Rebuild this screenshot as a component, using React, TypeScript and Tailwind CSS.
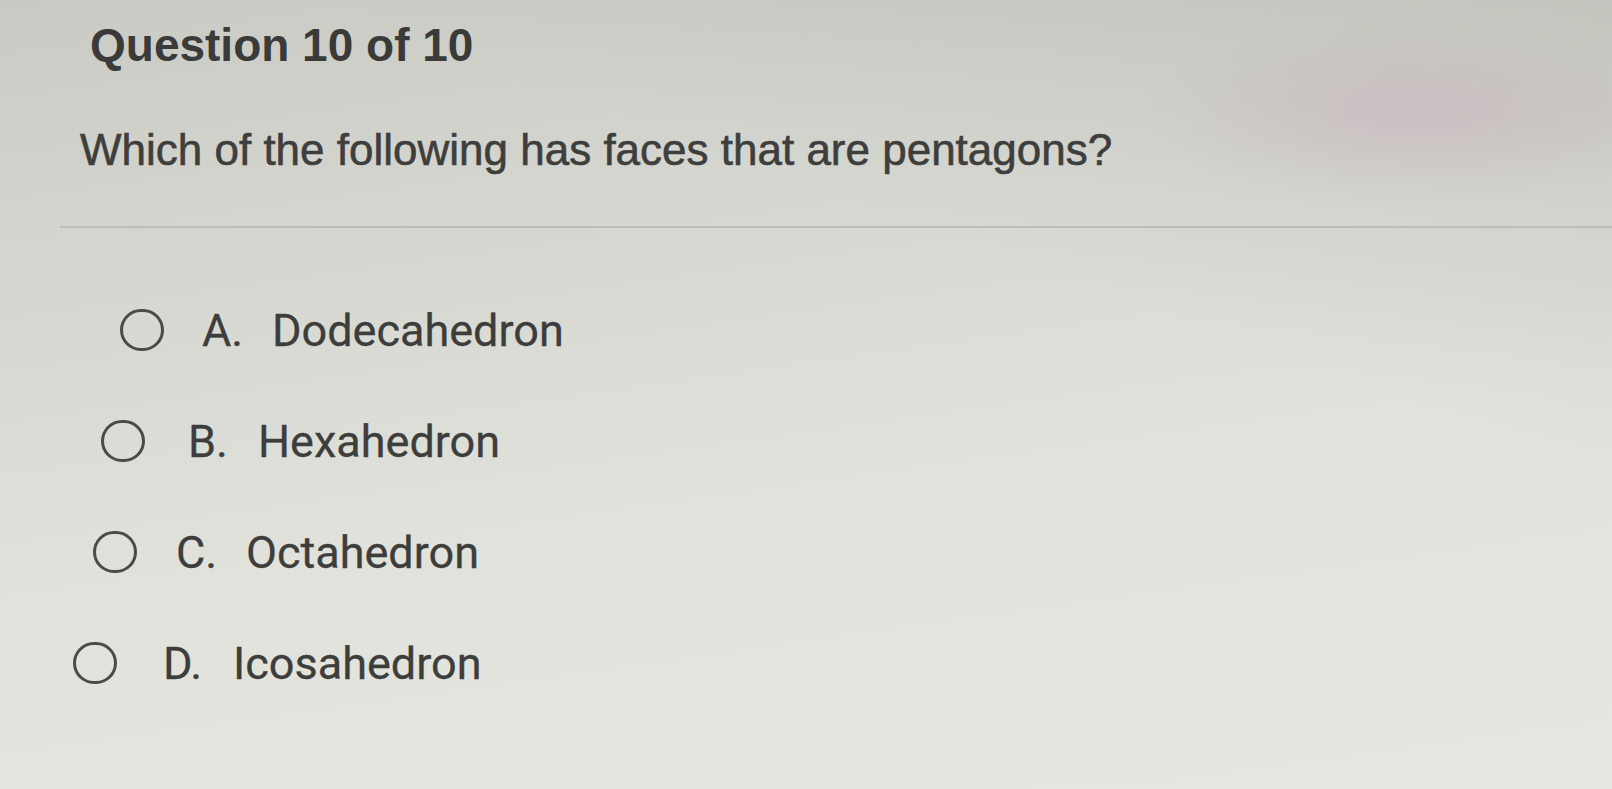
import { FunctionComponent } from "react";

type Choice = {
  letter: string;
  label: string;
  indent: string;
  gap: string;
};

// the photo is taken at an angle, so each row sits a little further left
const choices: Choice[] = [
  { letter: "A.", label: "Dodecahedron", indent: "ml-[40px]", gap: "ml-[38px]" },
  { letter: "B.", label: "Hexahedron", indent: "ml-[21px]", gap: "ml-[43px]" },
  { letter: "C.", label: "Octahedron", indent: "ml-[13px]", gap: "ml-[39px]" },
  { letter: "D.", label: "Icosahedron", indent: "ml-[-7px]", gap: "ml-[46px]" },
];

const ChoiceRow: FunctionComponent<{ choice: Choice }> = ({ choice }) => {
  return (
    <label
      className={`flex items-center h-[44px] cursor-pointer ${choice.indent}`}
    >
      <span className="w-[44px] h-[42px] rounded-full border-[3px] border-[#4a4a48] shrink-0" />
      <span
        className={`flex items-baseline text-[45px] leading-none text-[#3d3d3b] font-['Roboto',sans-serif] [-webkit-text-stroke:0.3px_#3d3d3b] ${choice.gap}`}
      >
        <span className="w-[70px]">{choice.letter}</span>
        <span>{choice.label}</span>
      </span>
    </label>
  );
};

export default function App() {
  return (
    <div className="min-h-[789px] w-full overflow-hidden bg-[linear-gradient(172deg,#c9cac4_0%,#d6d7d1_30%,#e1e2dc_60%,#e6e6e0_100%)]">
      <div className="min-h-[789px] bg-[radial-gradient(ellipse_280px_90px_at_88%_14%,rgba(200,180,188,0.55)_0%,rgba(200,180,188,0)_100%),linear-gradient(200deg,rgba(170,172,162,0.35)_0%,rgba(170,172,162,0)_35%)]">
        <div className="pt-[22px] pl-[80px] font-['Liberation_Sans',Arial,sans-serif]">
          <h1 className="ml-[10px] text-[46px] leading-none font-bold text-[#3a3a39]">
            Question 10 of 10
          </h1>
          <p className="mt-[60px] text-[44px] leading-none text-[#3e3e3d] [-webkit-text-stroke:0.6px_#3e3e3d]">
            Which of the following has faces that are pentagons?
          </p>
        </div>
        <div className="mt-[54px] ml-[60px] h-[2px] bg-[#bcbdb6]" />
        <div className="mt-[80px] pl-[80px] flex flex-col gap-[67px]">
          {choices.map((c) => (
            <ChoiceRow key={c.letter} choice={c} />
          ))}
        </div>
      </div>
    </div>
  );
}
